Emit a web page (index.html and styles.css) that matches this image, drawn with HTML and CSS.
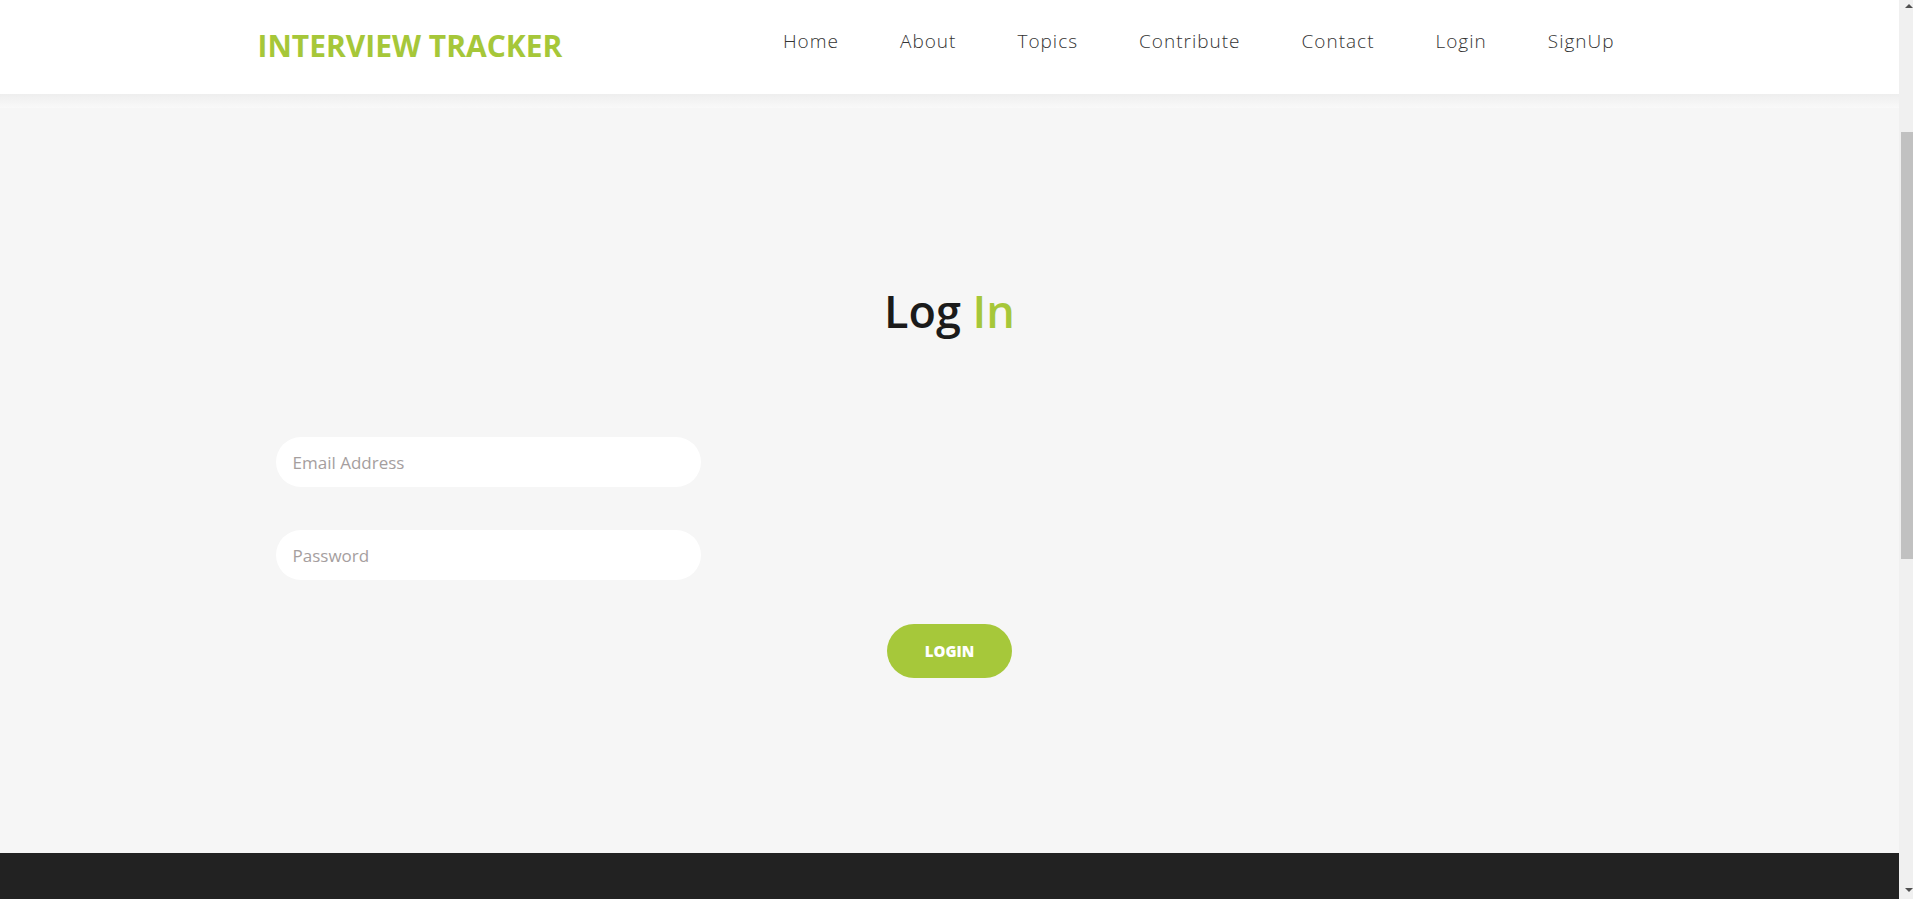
FILE: index.html
```html
<!DOCTYPE html>
<html lang="en">
<head>
<meta charset="utf-8">
<title>Interview Tracker - Log In</title>
<link rel="stylesheet" href="styles.css">
</head>
<body>
<header class="site-header">
  <div class="header-inner">
    <a class="logo" href="#">INTERVIEW TRACKER</a>
    <nav class="main-nav">
      <a href="#">Home</a>
      <a href="#">About</a>
      <a href="#">Topics</a>
      <a href="#">Contribute</a>
      <a href="#">Contact</a>
      <a href="#">Login</a>
      <a href="#">SignUp</a>
    </nav>
  </div>
</header>
<main class="login-section">
  <h1 class="login-title">Log <span class="accent">In</span></h1>
  <form class="login-form">
    <div class="field-col">
      <input class="field" type="email" placeholder="Email Address">
      <input class="field" type="password" placeholder="Password">
    </div>
    <div class="btn-row">
      <button class="btn-login" type="button">LOGIN</button>
    </div>
  </form>
</main>
<footer class="site-footer"></footer>
<div class="scrollbar" aria-hidden="true">
  <div class="sb-btn"><span class="sb-arrow-up"></span></div>
  <div class="sb-track"><div class="sb-thumb"></div></div>
  <div class="sb-btn sb-btn-down"><span class="sb-arrow-down"></span></div>
</div>
<script src="script.js"></script>
</body>
</html>
```

FILE: styles.css
```css
* { box-sizing: border-box; }
html, body { margin: 0; padding: 0; }
body {
  background: #f8f8f8;
  font-family: "Open Sans", "Liberation Sans", sans-serif;
  padding-top: 108px;
  margin-right: 14px;
}
.site-header {
  position: fixed;
  top: 0;
  left: 0;
  right: 14px;
  height: 94px;
  background: #ffffff;
  z-index: 10;
}
.site-header::after {
  content: "";
  position: absolute;
  left: 0;
  right: 0;
  top: 94px;
  height: 14px;
  background: linear-gradient(#eeeeee, #f9f9f9);
}
.header-inner {
  max-width: 1400px;
  height: 94px;
  margin: 0 auto;
  padding: 0 35px 0 8px;
  display: flex;
  align-items: center;
  justify-content: space-between;
}
.logo {
  font-weight: 700;
  font-size: 30px;
  line-height: 30px;
  color: #a6c739;
  text-decoration: none;
  padding-bottom: 3px;
}
.main-nav {
  display: flex;
  gap: 61px;
  padding-bottom: 12px;
}
.main-nav a {
  font-weight: 300;
  font-size: 19px;
  line-height: 19px;
  letter-spacing: 1px;
  color: #333333;
  text-decoration: none;
}
.login-section {
  background: #f6f6f6;
  padding: 418px 0 175px;
}
.login-title {
  margin: 0;
  text-align: center;
  font-weight: 600;
  font-size: 45px;
  line-height: 54px;
  color: #1b1b1b;
}
.accent { color: #a6c739; }
.login-form {
  max-width: 1400px;
  margin: 99px auto 0;
  padding: 0 26px;
}
.field-col {
  display: flex;
  flex-direction: column;
  gap: 43px;
  width: 425px;
}
.field {
  width: 425px;
  height: 50px;
  border: none;
  border-radius: 25px;
  background: #ffffff;
  padding: 0 17px;
  font-family: "Open Sans", "Liberation Sans", sans-serif;
  font-size: 17px;
  color: #333;
  outline: none;
}
.field::placeholder { color: #a59e9e; }
.btn-row {
  display: flex;
  justify-content: center;
  margin-top: 44px;
}
.btn-login {
  width: 125px;
  height: 54px;
  border: none;
  border-radius: 27px;
  background: #a6c83a;
  color: #ffffff;
  font-family: "Open Sans", "Liberation Sans", sans-serif;
  font-weight: 800;
  font-size: 15px;
  cursor: pointer;
}
.site-footer {
  background: #222222;
  height: 725px;
}

/* window scrollbar */
.scrollbar {
  position: fixed;
  top: 0;
  right: 0;
  bottom: 0;
  width: 14px;
  background: #f0f0f0;
  display: flex;
  flex-direction: column;
  z-index: 20;
}
.sb-btn {
  height: 17px;
  padding: 4px 0 0 6px;
}
.sb-btn-down {
  padding-top: 6px;
}
.sb-arrow-up,
.sb-arrow-down {
  display: block;
  width: 0;
  height: 0;
  border-left: 4px solid transparent;
  border-right: 4px solid transparent;
}
.sb-arrow-up { border-bottom: 4px solid #505050; }
.sb-arrow-down { border-top: 4px solid #505050; }
.sb-track {
  flex: 1;
  padding: 115px 0 0 2px;
}
.sb-thumb {
  height: 427px;
  background: #c1c1c1;
}
```

FILE: script.js
```js
window.scrollTo(0, 242);
```
